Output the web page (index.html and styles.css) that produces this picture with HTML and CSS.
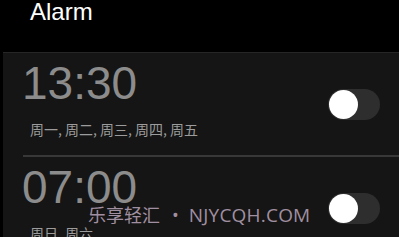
FILE: index.html
```html
<!DOCTYPE html>
<html>
<head>
<meta charset="utf-8">
<link rel="stylesheet" href="styles.css">
</head>
<body>
<div class="screen">
  <div class="header">Alarm</div>
  <div class="list">
    <div class="row">
      <div class="info">
        <div class="time">13:30</div>
        <div class="days">周一, 周二, 周三, 周四, 周五</div>
      </div>
      <div class="toggle"><div class="knob"></div></div>
    </div>
    <div class="sep"></div>
    <div class="row">
      <div class="info">
        <div class="time">07:00</div>
        <div class="days">周日, 周六</div>
      </div>
      <div class="toggle"><div class="knob"></div></div>
    </div>
  </div>
  <div class="watermark"><span class="wm-cn">乐享轻汇</span><span class="wm-dot">•</span><span class="wm-en">NJYCQH.COM</span></div>
</div>
</body>
</html>
```
FILE: styles.css
```css
html, body {
  margin: 0;
  padding: 0;
  background: #000;
}
.screen {
  position: relative;
  width: 399px;
  height: 237px;
  overflow: hidden;
  font-family: "Liberation Sans", "Noto Sans CJK SC", sans-serif;
}
.header {
  height: 52px;
  padding-left: 30px;
  color: #fff;
  font-size: 24px;
  line-height: 24px;
  box-sizing: border-box;
}
.list {
  margin-left: 3px;
  background: #151515;
  border-top: 1px solid #262626;
}
.row {
  display: flex;
  align-items: center;
  justify-content: space-between;
  height: 102px;
  padding: 0 19px 0 19px;
  box-sizing: border-box;
}
.info {
  align-self: flex-start;
  display: flex;
  flex-direction: column;
  padding-top: 7px;
}
.time {
  color: #8c8c8c;
  font-size: 46px;
  line-height: 46px;
}
.days {
  color: #9c9c9c;
  font-size: 14px;
  line-height: 16px;
  margin-top: 15px;
  margin-left: 8px;
  font-family: "Noto Sans CJK SC", sans-serif;
}
.sep {
  height: 2px;
  margin-left: 20px;
  background: #383838;
}
.toggle {
  width: 52px;
  height: 31px;
  border-radius: 16px;
  background: #2e2e2e;
  display: flex;
  align-items: center;
  padding-left: 1px;
  box-sizing: border-box;
}
.knob {
  width: 29px;
  height: 29px;
  border-radius: 50%;
  background: #fff;
}
.watermark {
  position: absolute;
  left: 88px;
  top: 203px;
  display: flex;
  align-items: baseline;
  color: #a08fa0;
  font-size: 18px;
  line-height: 22px;
  white-space: nowrap;
}
.wm-cn {
  font-family: "Noto Sans CJK SC", sans-serif;
}
.wm-dot {
  font-family: "Open Sans", sans-serif;
  margin: 0 10px 0 12px;
}
.wm-en {
  font-family: "Open Sans", sans-serif;
  font-size: 19px;
  letter-spacing: 0.2px;
}
```
